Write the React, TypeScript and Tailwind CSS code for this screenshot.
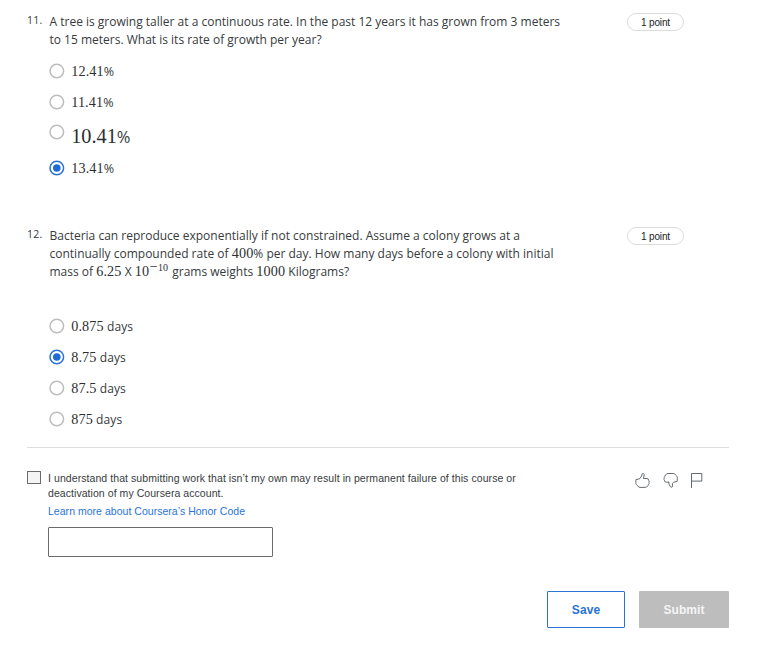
import { ReactNode } from 'react';

function Radio({ checked = false }: { checked?: boolean }) {
  return (
    <svg className="-ml-[0.5px] mr-[0.5px] block h-4 w-4 shrink-0" viewBox="0 0 16 16" fill="none">
      <circle cx="7.8" cy="8" r="6.8" stroke={checked ? '#2a73d6' : '#bdbdbd'} strokeWidth="1.5" />
      {checked && <circle cx="7.8" cy="8" r="3.8" fill="#1f6bd6" />}
    </svg>
  );
}

function M({ children }: { children: ReactNode }) {
  return (
    <span className="font-['Liberation_Serif',serif] text-[14.2px] leading-none tracking-[0.13px] text-[#2c2e30]">
      {children}
    </span>
  );
}

function Option({ checked, className, children }: { checked?: boolean; className: string; children: ReactNode }) {
  return (
    <label className={`flex items-start ${className}`}>
      <Radio checked={checked} />
      <span className="ml-[6.2px] mt-px whitespace-pre leading-4 tracking-[0.1px]">{children}</span>
    </label>
  );
}

function Percent() {
  return <span className="text-[12.5px] leading-none">%</span>;
}

function Question({ number, children }: { number: string; children: ReactNode }) {
  return (
    <div className="flex items-start">
      <span className="w-[22.5px] shrink-0 text-[10.5px] leading-[15px] tracking-[0.2px]">{number}</span>
      <div className="w-[577.5px] shrink-0 whitespace-pre leading-[18px]">{children}</div>
      <span className="flex h-[18px] w-[57px] shrink-0 items-center justify-center rounded-full border border-[#dcdcdc] pt-px font-['Liberation_Sans',sans-serif] text-[10px] tracking-[-0.15px] text-[#222]">
        1 point
      </span>
    </div>
  );
}

export default function App() {
  return (
    <main className="h-[648px] w-[770px] overflow-hidden bg-white pl-[27px] pt-[13px] font-['Open_Sans',sans-serif] text-xs text-[#373a3c]">
      <section className="h-[214px]">
        <Question number="11.">
          <div>A tree is growing taller at a continuous rate. In the past 12 years it has grown from 3 meters</div>
          <div>to 15 meters. What is its rate of growth per year?</div>
        </Question>
        <div className="pl-[22px] pt-[14px]">
          <Option className="h-[31px]"><M>12.41</M><Percent /></Option>
          <Option className="h-[30px]"><M>11.41</M><Percent /></Option>
          <Option className="h-9">
            <span className="relative top-[3px] text-[16.5px] tracking-normal">
              <span className="font-['Liberation_Serif',serif] text-[20.3px] text-[#2c2e30]">10.41</span>%
            </span>
          </Option>
          <Option checked className="h-4"><M>13.41</M><Percent /></Option>
        </div>
      </section>

      <section className="h-[220px]">
        <Question number="12.">
          <div>Bacteria can reproduce exponentially if not constrained. Assume a colony grows at a</div>
          <div>continually compounded rate of <M>400</M>% per day. How many days before a colony with initial</div>
          <div className="h-[18px]">
            mass of <M>6.25</M> X <M>10</M>
            <span className="relative -top-[5px] ml-[0.5px] mr-px font-['Liberation_Serif',serif] text-[10px] leading-none text-[#2c2e30]">
              <span className="mr-[0.5px] text-[14px] leading-none">−</span>10
            </span>
            {' '}grams weights <M>1000</M> Kilograms?
          </div>
        </Question>
        <div className="pl-[22px] pt-[37px]">
          <Option className="h-[31px]"><M>0.875</M> days</Option>
          <Option checked className="h-[31px]"><M>8.75</M> days</Option>
          <Option className="h-[31px]"><M>87.5</M> days</Option>
          <Option className="h-4"><M>875</M> days</Option>
        </div>
      </section>

      <section className="w-[702px] border-t border-[#dedede] font-['Liberation_Sans',sans-serif]">
        <div className="flex pt-[23px]">
          <span className="h-[13px] w-[14px] shrink-0 border border-[#6b6b6b] bg-[#f4f4f4]" />
          <div className="ml-[7px] w-[587px] shrink-0 whitespace-pre text-[10.5px] leading-[15px]">
            <div className="tracking-[0.073px]">I understand that submitting work that isn’t my own may result in permanent failure of this course or</div>
            <div className="tracking-[0.06px]">deactivation of my Coursera account.</div>
            <a className="mt-[3px] block tracking-[0.03px] text-[#2a73d6]">Learn more about Coursera’s Honor Code</a>
            <input aria-label="Name" className="mt-2 block h-[30px] w-[225px] rounded-[1px] border border-[#6b6b6b] bg-white" />
          </div>
          <svg className="mt-px h-[17px] w-[68px]" viewBox="0 0 68 17" fill="none" stroke="#555b61" strokeWidth="0.9" strokeLinejoin="round">
            <path d="M.9 7.6 4.6 6.8 6.6 4 7.1 1.8Q8.9 1 9.3 2.6L8.4 6.5H12Q13.7 6.7 13.6 8.2 14.6 9 14 10.3 14.6 11.5 13.5 12.4 13.6 13.9 12.2 14.2 11.7 15.4 10.3 15.4H5Q3.4 15.4 2.8 13.9L1.3 12.4Q.7 11.8.8 10.8Z" />
            <path d="M42.2 9.4 38.7 10.2 37.4 11.4V14.8Q35.8 16 35.2 14.5L33.9 12 34 10.1H30.8Q29.3 9.9 29.5 8.5 28.6 7.6 29.2 6.4 28.8 5.1 29.8 4.4 29.8 3 31.2 2.6 31.6 1.5 33 1.5H38.2Q39.8 1.5 40.4 2.8L41.8 4.1Q42.4 4.7 42.3 5.7Z" />
            <path d="M56.5 16V1.5h10.3v7.6H56.5" />
          </svg>
        </div>
        <div className="mt-[34px] flex justify-end gap-[14px] text-xs font-bold">
          <button className="h-[37px] w-[78px] rounded-[1px] border border-[#2a73d0] bg-white tracking-[0.1px] text-[#2a73d6]">Save</button>
          <button className="h-[37px] w-[90px] rounded-[1px] bg-[#bdbdbd] tracking-[0.05px] text-[#f5f5f5]">Submit</button>
        </div>
      </section>
    </main>
  );
}
